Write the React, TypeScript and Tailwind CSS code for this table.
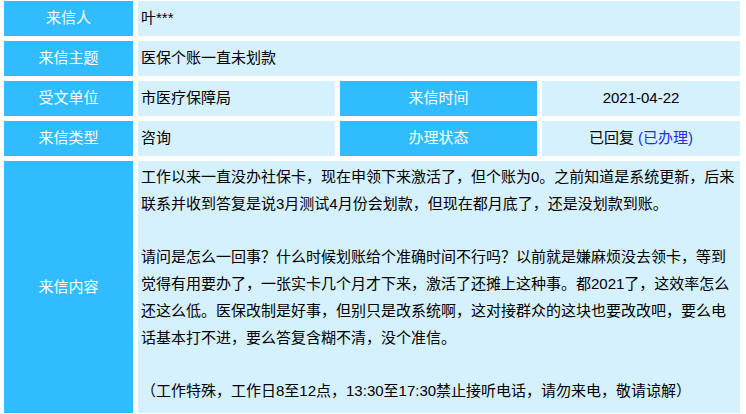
import type { ReactNode } from "react";

const font = "font-['Liberation_Sans','Noto_Sans_CJK_SC',sans-serif]";

function Label({ children, className = "" }: { children: ReactNode; className?: string }) {
  return (
    <div
      className={`flex items-center justify-center bg-[#30bcff] text-[15px] text-white ${className}`}
    >
      {children}
    </div>
  );
}

function Value({ children, className = "" }: { children: ReactNode; className?: string }) {
  return (
    <div className={`flex items-center bg-[#d5f1fd] px-[3px] text-[15px] text-black ${className}`}>
      {children}
    </div>
  );
}

const paragraphs = [
  "工作以来一直没办社保卡，现在申领下来激活了，但个账为0。之前知道是系统更新，后来联系并收到答复是说3月测试4月份会划款，但现在都月底了，还是没划款到账。",
  "请问是怎么一回事？什么时候划账给个准确时间不行吗？以前就是嫌麻烦没去领卡，等到觉得有用要办了，一张实卡几个月才下来，激活了还摊上这种事。都2021了，这效率怎么还这么低。医保改制是好事，但别只是改系统啊，这对接群众的这块也要改改吧，要么电话基本打不进，要么答复含糊不清，没个准信。",
  "（工作特殊，工作日8至12点，13:30至17:30禁止接听电话，请勿来电，敬请谅解）",
];

export default function App() {
  return (
    <div className={`h-[414px] overflow-hidden bg-white pl-[4px] pt-[1px] ${font}`}>
      <div className="grid w-[736px] grid-cols-[129px_197px_197px_198px] grid-rows-[35px_35px_35px_35px_auto] gap-[5px]">
        <Label>来信人</Label>
        <Value className="col-span-3">叶***</Value>

        <Label>来信主题</Label>
        <Value className="col-span-3">医保个账一直未划款</Value>

        <Label>受文单位</Label>
        <Value>市医疗保障局</Value>
        <Label>来信时间</Label>
        <Value className="justify-center">2021-04-22</Value>

        <Label>来信类型</Label>
        <Value>咨询</Value>
        <Label>办理状态</Label>
        <Value className="justify-center">
          已回复&nbsp;<span className="text-[#2a2ae8]">(已办理)</span>
        </Value>

        <Label>来信内容</Label>
        <div className="col-span-3 min-h-[252px] bg-[#d5f1fd] px-[3px] pt-[3px] text-[15px] leading-[26.75px] text-black">
          <p>{paragraphs[0]}</p>
          <p className="mt-[26.75px]">{paragraphs[1]}</p>
          <p className="mt-[26.75px]">{paragraphs[2]}</p>
        </div>
      </div>
    </div>
  );
}
